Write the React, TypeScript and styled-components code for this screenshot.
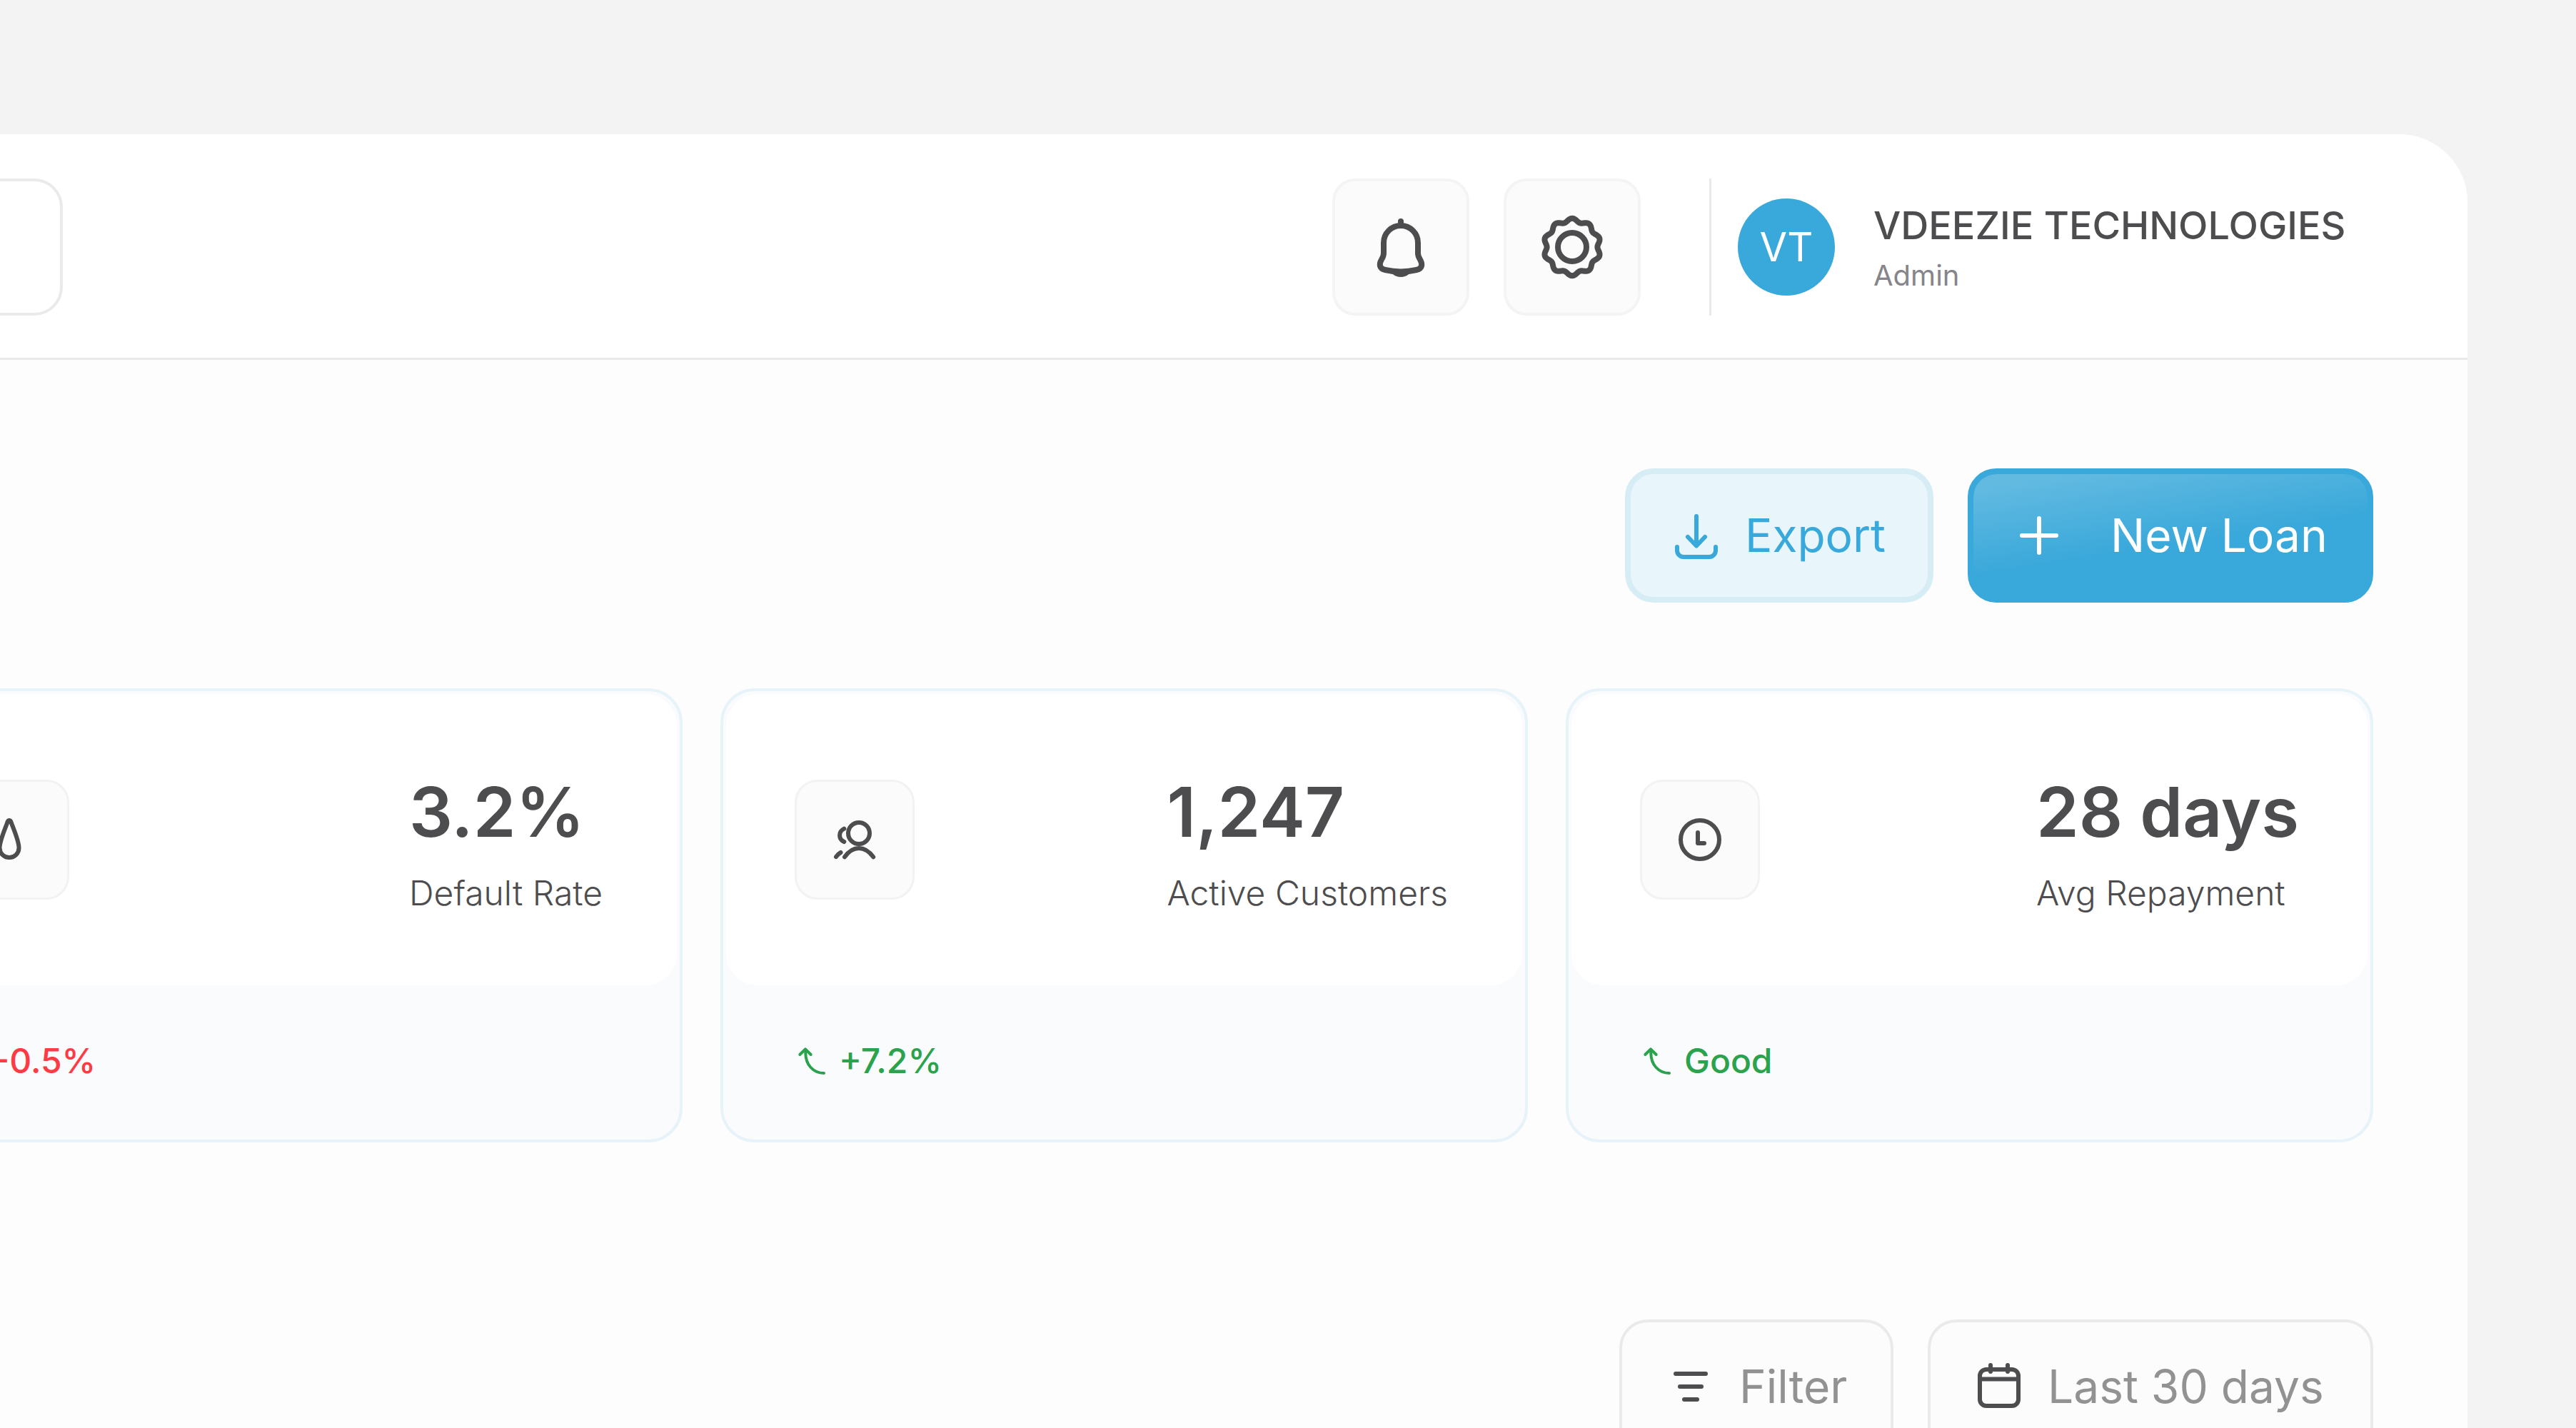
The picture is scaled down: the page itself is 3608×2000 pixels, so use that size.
import React from "react";
import styled, { createGlobalStyle } from "styled-components";

const ink = "#4d4d4f";
const blue = "#39a8da";

const GlobalStyle = createGlobalStyle`
  *, *::before, *::after { box-sizing: border-box; }
  html, body { margin: 0; height: 100%; overflow: hidden; }
  body {
    background: #f3f3f3;
    color: ${ink};
    font-family: Inter, "Liberation Sans", sans-serif;
  }
  button, input { font: inherit; color: inherit; }
  p, h2 { margin: 0; }
`;

const Page = styled.div`
  height: 100vh;
  overflow: hidden;
  padding: 188px 152px 0 0;
`;

/* The panel runs on past the left edge of the window. */
const Panel = styled.div`
  margin-left: -307px;
  min-height: 100%;
  background: #fdfdfd;
  border-top-right-radius: 96px;
  overflow: hidden;
`;

const Header = styled.header`
  display: flex;
  align-items: center;
  justify-content: space-between;
  padding: 62px 132px 59px;
  background: #ffffff;
  border-bottom: 3px solid #e9e9e9;
`;

const Search = styled.input`
  width: 263px;
  height: 192px;
  padding: 0 48px;
  border: 4px solid #eaeaea;
  border-radius: 40px;
  background: #ffffff;
  font-size: 48px;
`;

const HeaderTools = styled.div`
  display: flex;
  align-items: center;
  gap: 48px;
`;

const IconButton = styled.button`
  display: grid;
  place-items: center;
  width: 192px;
  height: 192px;
  padding: 0;
  border: 4px solid #f4f4f4;
  border-radius: 32px;
  background: #fbfbfb;
`;

const Profile = styled.div`
  display: flex;
  align-items: center;
  gap: 54px;
  width: 930px;
  height: 192px;
  margin-left: 48px;
  padding-left: 37px;
  border-left: 3px solid #e9e9e9;
`;

const Avatar = styled.span`
  display: grid;
  place-items: center;
  flex: none;
  width: 136px;
  height: 136px;
  border-radius: 50%;
  background: ${blue};
  color: #ffffff;
  font-size: 56px;
  line-height: 68px;
`;

const ProfileText = styled.div`
  display: flex;
  flex-direction: column;
  gap: 12px;
`;

const ProfileName = styled.p`
  font-size: 54px;
  line-height: 68px;
  font-weight: 500;
  white-space: nowrap;
`;

const ProfileRole = styled.p`
  color: #85858a;
  font-size: 40px;
  line-height: 48px;
`;

const Main = styled.main`
  padding: 152px 132px 0;
`;

const Toolbar = styled.div`
  display: flex;
  justify-content: flex-end;
  gap: 48px;
`;

type Tone = "soft" | "primary" | "plain";

const tones: Record<Tone, string> = {
  soft: `
    border: 8px solid #d6edf5;
    background: #e8f5fa;
    color: ${blue};
  `,
  primary: `
    border: 8px solid ${blue};
    background: linear-gradient(171deg, #62bae1 8%, ${blue} 56%) padding-box, ${blue} border-box;
    color: #ffffff;
  `,
  plain: `
    border: 4px solid #eaeaea;
    background: #fcfcfc;
    color: #929292;
  `,
};

const Button = styled.button<{ $tone: Tone; $minWidth: number; $gap?: number }>`
  display: flex;
  align-items: center;
  gap: ${(p) => p.$gap ?? 32}px;
  min-width: ${(p) => p.$minWidth}px;
  height: 188px;
  padding: 0 ${(p) => (p.$tone === "plain" ? 60 : 56)}px;
  border-radius: 40px;
  font-size: 64px;
  line-height: 78px;
  white-space: nowrap;
  ${(p) => tones[p.$tone]}
`;

const CardGrid = styled.section`
  display: grid;
  grid-template-columns: repeat(3, 1fr);
  gap: 53px;
  margin: 120px 0 248px;
`;

const Card = styled.article`
  padding: 4px;
  border: 4px solid #e6f3f9;
  border-radius: 48px;
  background: #fafbfd;
`;

const CardTop = styled.div`
  display: flex;
  align-items: center;
  justify-content: space-between;
  height: 408px;
  padding: 0 96px;
  border-radius: 44px;
  background: #ffffff;
`;

const Tile = styled.span`
  display: grid;
  place-items: center;
  width: 168px;
  height: 168px;
  border: 3px solid #f2f2f2;
  border-radius: 32px;
  background: #fbfbfb;
`;

const Metric = styled.div`
  display: flex;
  flex-direction: column;
  gap: 22px;
`;

const MetricValue = styled.h2`
  font-size: 96px;
  line-height: 128px;
  font-weight: 600;
  white-space: nowrap;
`;

const MetricLabel = styled.p`
  padding-right: 8px;
  font-size: 48px;
  line-height: 56px;
  font-weight: 300;
  white-space: nowrap;
`;

const Trend = styled.div<{ $down?: boolean }>`
  display: flex;
  align-items: center;
  gap: 14px;
  height: 212px;
  padding: 0 96px;
  color: ${(p) => (p.$down ? "#fd3b45" : "#2ba24c")};
  font-size: 48px;
  line-height: 58px;
  font-weight: 500;
`;

const Svg = styled.svg`
  display: block;
  flex: none;
  fill: none;
  stroke-linecap: round;
  stroke-linejoin: round;
`;

type IconProps = {
  size?: number;
  weight?: number;
  color?: string;
  children: React.ReactNode;
};

const Icon = ({ size = 72, weight = 6, color = "currentColor", children }: IconProps) => (
  <Svg
    width={size}
    height={size}
    viewBox={`0 0 ${size} ${size}`}
    stroke={color}
    strokeWidth={weight}
    aria-hidden="true"
  >
    {children}
  </Svg>
);

const BellIcon = () => (
  <Icon size={96} weight={8} color={ink}>
    <path d="M48 18C34.7 18 24 28.7 24 42V57C24 60.500 22.500 63 21 65.500C19 69 18.300 71.500 19 74.500C19.800 78 23 79.300 26 80C40 83.200 56 83.200 70 80C73 79.300 76.200 78 77 74.500C77.700 71.500 77 69 75 65.500C73.500 63 72 60.500 72 57V42C72 28.700 61.300 18 48 18Z" />
    <path d="M48 12V18" />
    <path d="M40 83.500C44 86.800 52 86.800 56 83.500" />
  </Icon>
);

/* A ring with ten soft lobes. */
const lobedRing = (() => {
  const points: string[] = [];
  for (let i = 0; i < 240; i++) {
    const angle = (i / 240) * Math.PI * 2;
    const radius = 37.8 + 2.4 * Math.cos(10 * angle);
    const x = 48 + radius * Math.sin(angle);
    const y = 48 - radius * Math.cos(angle);
    points.push(`${x.toFixed(2)} ${y.toFixed(2)}`);
  }
  return `M${points.join("L")}Z`;
})();

const SettingsIcon = () => (
  <Icon size={96} weight={8} color={ink}>
    <path d={lobedRing} />
    <circle cx="48" cy="48" r="20" />
  </Icon>
);

const DownloadIcon = () => (
  <Icon>
    <path d="M36 9V50" />
    <path d="M24 38L36 50.500L48 38" />
    <path d="M9 52V57A9 9 0 0 0 18 66H54A9 9 0 0 0 63 57V52" />
  </Icon>
);

const PlusIcon = () => (
  <Icon>
    <path d="M36 12V60M12 36H60" />
  </Icon>
);

const DropIcon = () => (
  <Icon color={ink}>
    <path d="M33.800 10.500C34.600 8.400 37.400 8.400 38.200 10.500C41 19 49.500 37 49.500 47.500A13.500 13.500 0 0 1 22.500 47.500C22.500 37 31 19 33.800 10.500Z" />
  </Icon>
);

const PeopleIcon = () => (
  <Icon color={ink}>
    <circle cx="42" cy="27" r="15" />
    <path d="M22 60.300C27.500 52.500 34 48 42 48S56.500 52.500 62.200 60.300" />
    <path d="M21.300 20.700C13 25 13 35 21.300 39" />
    <path d="M10 60C12 57.300 14 55.300 16.500 54" />
  </Icon>
);

const ClockIcon = () => (
  <Icon color={ink}>
    <circle cx="36" cy="36" r="27" />
    <path d="M33 26V41H42" />
  </Icon>
);

const FilterIcon = () => (
  <Icon color={ink}>
    <path d="M15 18H57M21 36H51M27 54H45" />
  </Icon>
);

const CalendarIcon = () => (
  <Icon color={ink}>
    <rect x="9" y="12" width="54" height="51" rx="9" />
    <path d="M24 6V15M48 6V15" />
    <path d="M9 25.500H63" />
  </Icon>
);

const TrendIcon = ({ down }: { down?: boolean }) => (
  <Icon size={48} weight={4}>
    <g transform={down ? "matrix(1 0 0 -1 0 48)" : undefined}>
      <path d="M15.300 8V13C15.300 29 26 41 41 41" />
      <path d="M7.300 15L15 7.300L22.700 15" />
    </g>
  </Icon>
);

type Stat = {
  icon: React.ReactNode;
  value: string;
  label: string;
  trend: string;
  down?: boolean;
};

const stats: Stat[] = [
  { icon: <DropIcon />, value: "3.2%", label: "Default Rate", trend: "-0.5%", down: true },
  { icon: <PeopleIcon />, value: "1,247", label: "Active Customers", trend: "+7.2%" },
  { icon: <ClockIcon />, value: "28 days", label: "Avg Repayment", trend: "Good" },
];

export default function App() {
  return (
    <>
      <GlobalStyle />
      <Page>
        <Panel>
          <Header>
            <Search type="search" aria-label="Search" />
            <HeaderTools>
              <IconButton type="button" aria-label="Notifications">
                <BellIcon />
              </IconButton>
              <IconButton type="button" aria-label="Settings">
                <SettingsIcon />
              </IconButton>
              <Profile>
                <Avatar>VT</Avatar>
                <ProfileText>
                  <ProfileName>VDEEZIE TECHNOLOGIES</ProfileName>
                  <ProfileRole>Admin</ProfileRole>
                </ProfileText>
              </Profile>
            </HeaderTools>
          </Header>
          <Main>
            <Toolbar>
              <Button type="button" $tone="soft" $minWidth={432}>
                <DownloadIcon />
                Export
              </Button>
              <Button type="button" $tone="primary" $minWidth={568} $gap={64}>
                <PlusIcon />
                New Loan
              </Button>
            </Toolbar>
            <CardGrid>
              {stats.map((s) => (
                <Card key={s.label}>
                  <CardTop>
                    <Tile>{s.icon}</Tile>
                    <Metric>
                      <MetricValue>{s.value}</MetricValue>
                      <MetricLabel>{s.label}</MetricLabel>
                    </Metric>
                  </CardTop>
                  <Trend $down={s.down}>
                    <TrendIcon down={s.down} />
                    {s.trend}
                  </Trend>
                </Card>
              ))}
            </CardGrid>
            <Toolbar>
              <Button type="button" $tone="plain" $minWidth={384}>
                <FilterIcon />
                Filter
              </Button>
              <Button type="button" $tone="plain" $minWidth={624}>
                <CalendarIcon />
                Last 30 days
              </Button>
            </Toolbar>
          </Main>
        </Panel>
      </Page>
    </>
  );
}
